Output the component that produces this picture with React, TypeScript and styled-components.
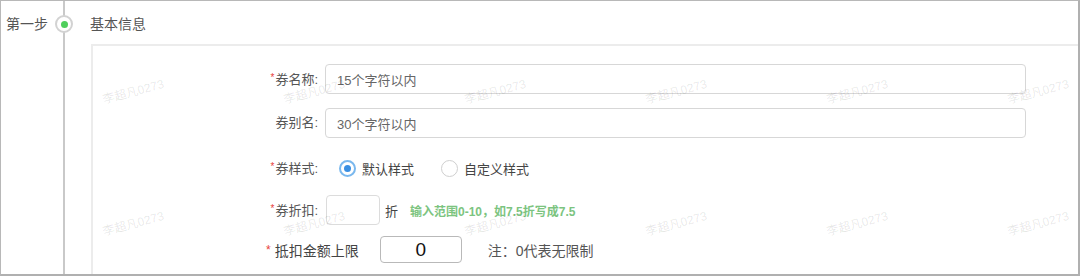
import React from "react";
import styled, { createGlobalStyle } from "styled-components";

const Global = createGlobalStyle`
  html, body { margin: 0; padding: 0; background: #fff; }
  body { font-family: "Liberation Sans", "Noto Sans CJK SC", sans-serif; }
  * { box-sizing: border-box; }
`;

const Frame = styled.div`
  position: relative;
  width: 1080px;
  height: 276px;
  overflow: hidden;
  background: #fff;
  border-top: 1px solid #b8b8b8;
  border-left: 1px solid #b8b8b8;
  border-right: 2px solid #b0b0b0;
  border-bottom: 2px solid #b0b0b0;
`;

const Step = styled.div`
  display: grid;
  grid-template-columns: 54px 18px 1fr;
  height: 100%;
`;

const StepLabel = styled.div`
  padding: 13px 0 0 5px;
  font-size: 14px;
  line-height: 20px;
  color: #555;
`;

const Axis = styled.div`
  padding-top: 14px;
  display: flex;
  justify-content: center;
  background: linear-gradient(#c9c9c9, #c9c9c9) center top / 2px 100% no-repeat;
`;

const Node = styled.div`
  width: 18px;
  height: 18px;
  border-radius: 50%;
  border: 2px solid #d2d2d2;
  background: #fff;
  display: flex;
  align-items: center;
  justify-content: center;
  &::after {
    content: "";
    width: 7px;
    height: 7px;
    border-radius: 50%;
    background: #4fcf5c;
  }
`;

const Content = styled.div`
  padding: 13px 0 0 17px;
  display: flex;
  flex-direction: column;
`;

const Title = styled.div`
  font-size: 14px;
  line-height: 20px;
  color: #555;
`;

const Card = styled.div`
  margin: 10px 0 0 1px;
  flex: 1;
  border-top: 2px solid #ececec;
  border-left: 2px solid #ececec;
  padding-top: 18px;
  display: flex;
  flex-direction: column;
`;

const FormRow = styled.div<{ $gap?: number; $h?: number }>`
  display: grid;
  grid-template-columns: 225px 1fr;
  column-gap: 7px;
  align-items: center;
  height: ${(p) => p.$h ?? 30}px;
  margin-top: ${(p) => p.$gap ?? 0}px;
`;

const Label = styled.div`
  text-align: right;
  font-size: 13px;
  line-height: 18px;
  color: #555;
  white-space: nowrap;
`;

const Star = styled.span`
  color: #e8423a;
  font-size: 10px;
  vertical-align: 3px;
  margin-right: 1px;
`;

const TextInput = styled.div`
  width: 701px;
  height: 30px;
  border: 1px solid #d7d7d7;
  border-radius: 4px;
  padding: 0 11px;
  display: flex;
  align-items: center;
  font-size: 13px;
  color: #666;
`;

const Controls = styled.div`
  display: flex;
  align-items: center;
`;

const Radio = styled.div<{ $on?: boolean }>`
  width: 17px;
  height: 17px;
  border-radius: 50%;
  border: ${(p) => (p.$on ? "2px solid #7ab8ee" : "1px solid #cfcfcf")};
  display: flex;
  align-items: center;
  justify-content: center;
  margin-left: ${(p) => (p.$on ? 14 : 27)}px;
  &::after {
    content: "";
    display: ${(p) => (p.$on ? "block" : "none")};
    width: 7px;
    height: 7px;
    border-radius: 50%;
    background: #3a8fe2;
  }
`;

const RadioText = styled.span`
  margin-left: 6px;
  font-size: 13px;
  color: #444;
`;

const SmallBox = styled.div`
  width: 54px;
  height: 30px;
  border: 1px solid #dcdcdc;
  border-radius: 4px;
  margin-left: 1px;
`;

const Unit = styled.span`
  margin-left: 5px;
  font-size: 13px;
  color: #444;
`;

const Hint = styled.span`
  margin-left: 12px;
  font-size: 12px;
  font-weight: bold;
  color: #7cc47f;
`;

const LimitRow = styled.div`
  display: flex;
  align-items: center;
  margin-top: 11px;
  padding-left: 173px;
  height: 27px;
`;

const LimitLabel = styled.span`
  font-size: 14px;
  color: #444;
  white-space: nowrap;
`;

const BigStar = styled.span`
  color: #e8423a;
  font-size: 12px;
  margin-right: 4px;
  vertical-align: 2px;
`;

const NumBox = styled.div`
  margin-left: 21px;
  width: 82px;
  height: 27px;
  border: 1px solid #b9b9b9;
  border-radius: 4px;
  display: flex;
  align-items: center;
  justify-content: center;
  font-size: 19px;
  color: #111;
`;

const Note = styled.span`
  margin-left: 26px;
  font-size: 14px;
  color: #555;
`;

const Watermarks = styled.div`
  position: absolute;
  inset: 0;
  pointer-events: none;
  display: grid;
  grid-template-columns: repeat(6, 181px);
  grid-auto-rows: 132px;
  padding: 86px 0 0 102px;
`;

const Mark = styled.div`
  height: 14px;
  font-size: 12px;
  line-height: 14px;
  color: rgba(0, 0, 0, 0.1);
  white-space: nowrap;
  transform: rotate(-15deg);
  transform-origin: left center;
  align-self: start;
  justify-self: start;
  margin-top: 6px;
`;

export default function App() {
  const marks = Array.from({ length: 12 });
  return (
    <>
      <Global />
      <Frame>
        <Step>
          <StepLabel>第一步</StepLabel>
          <Axis>
            <Node />
          </Axis>
          <Content>
            <Title>基本信息</Title>
            <Card>
              <FormRow>
                <Label>
                  <Star>*</Star>券名称:
                </Label>
                <TextInput>15个字符以内</TextInput>
              </FormRow>
              <FormRow $gap={14}>
                <Label>券别名:</Label>
                <TextInput>30个字符以内</TextInput>
              </FormRow>
              <FormRow $gap={15}>
                <Label>
                  <Star>*</Star>券样式:
                </Label>
                <Controls>
                  <Radio $on />
                  <RadioText>默认样式</RadioText>
                  <Radio />
                  <RadioText>自定义样式</RadioText>
                </Controls>
              </FormRow>
              <FormRow $gap={12}>
                <Label>
                  <Star>*</Star>券折扣:
                </Label>
                <Controls>
                  <SmallBox />
                  <Unit>折</Unit>
                  <Hint>输入范围0-10，如7.5折写成7.5</Hint>
                </Controls>
              </FormRow>
              <LimitRow>
                <LimitLabel>
                  <BigStar>*</BigStar>抵扣金额上限
                </LimitLabel>
                <NumBox>0</NumBox>
                <Note>注：0代表无限制</Note>
              </LimitRow>
            </Card>
          </Content>
        </Step>
        <Watermarks>
          {marks.map((_, i) => (
            <Mark key={i}>李超凡0273</Mark>
          ))}
        </Watermarks>
      </Frame>
    </>
  );
}
